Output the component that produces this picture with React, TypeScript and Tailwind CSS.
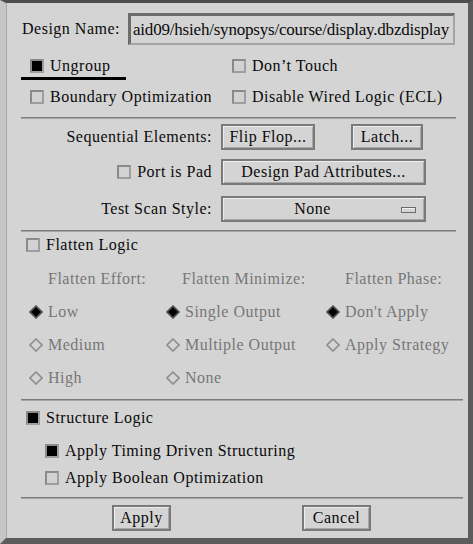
import React from "react";

function Check({ on }: { on?: boolean }) {
  return (
    <span
      className={`inline-block h-[14px] w-[14px] shrink-0 border-2 border-t-[#8a8a8a] border-l-[#8a8a8a] border-b-[#9e9e9e] border-r-[#9e9e9e] ${
        on ? "bg-black" : "bg-[#d2d2d2]"
      }`}
    />
  );
}

function Diamond({ on }: { on?: boolean }) {
  return (
    <svg width="14" height="14" viewBox="0 0 14 14" className="shrink-0">
      <polygon
        points="7,1 13,7 7,13 1,7"
        fill={on ? "#000" : "none"}
        stroke={on ? "#555" : "#8e8e8e"}
        strokeWidth="1.6"
      />
    </svg>
  );
}

function Btn({ children, className = "" }: { children: React.ReactNode; className?: string }) {
  return (
    <div
      className={`flex h-[26px] items-center justify-center border-2 border-[#7a7a7a] shadow-[inset_1px_1px_0_#eeeeee,inset_-1px_-1px_0_#a8a8a8] ${className}`}
    >
      {children}
    </div>
  );
}

function Sep({ wide }: { wide?: boolean }) {
  return (
    <div
      className={`ml-[14px] h-[2px] border-t border-t-[#7c7c7c] border-b border-b-[#a6a6a6] ${
        wide ? "w-[442px]" : "w-[435px]"
      }`}
    />
  );
}

function Radio({ on, label }: { on?: boolean; label: string }) {
  return (
    <div className="flex items-center gap-[5px]">
      <Diamond on={on} />
      <span className="text-[#777]">{label}</span>
    </div>
  );
}

export default function App() {
  return (
    <div className="h-[544px] w-[473px] border-t-[3px] border-t-[#4d4d4d] border-l-[6px] border-l-[#c6c6c6] border-r-[5px] border-r-[#5c5c5c] border-b-[6px] border-b-[#5c5c5c] bg-[#d4d4d4] font-['Liberation_Serif',serif] text-[16px] tracking-[0.5px] text-[#0a0a0a]">
      <div className="h-full border-l border-l-[#a8a8a8] pt-[10px]">
        {/* Design name */}
        <div className="flex h-[32px] items-center">
          <span className="ml-[15px] w-[106px]">Design Name:</span>
          <div className="flex h-[32px] w-[327px] items-center border-t-[3px] border-l-[3px] border-t-[#6c6c6c] border-l-[#6c6c6c] border-b-2 border-r-2 border-b-[#a4a4a4] border-r-[#a4a4a4] pl-[2px] text-[17px] tracking-[-0.2px]">
            aid09/hsieh/synopsys/course/display.dbzdisplay
          </div>
        </div>

        {/* Options */}
        <div className="mt-[10px] flex h-[25px]">
          <div className="ml-[14px] flex w-[105px] items-center gap-[6px] border-b-[3px] border-b-black pl-[9px]">
            <Check on />
            <span>Ungroup</span>
          </div>
          <div className="ml-[106px] flex items-center gap-[6px] pb-[3px]">
            <Check />
            <span>Don&rsquo;t Touch</span>
          </div>
        </div>
        <div className="mt-[5px] flex h-[24px] items-center">
          <div className="ml-[23px] flex w-[202px] items-center gap-[6px]">
            <Check />
            <span>Boundary Optimization</span>
          </div>
          <div className="flex items-center gap-[6px]">
            <Check />
            <span>Disable Wired Logic (ECL)</span>
          </div>
        </div>

        <div className="mt-[8px]">
          <Sep />
        </div>

        {/* Sequential / pad / scan */}
        <div className="mt-[5px] flex h-[26px] items-center">
          <span className="w-[207px] pr-[2px] text-right">Sequential Elements:</span>
          <Btn className="ml-[7px] w-[94px]">Flip Flop...</Btn>
          <Btn className="ml-[36px] w-[72px]">Latch...</Btn>
        </div>
        <div className="mt-[9px] flex h-[26px] items-center">
          <div className="flex w-[207px] items-center justify-end gap-[6px] pr-[2px]">
            <Check />
            <span>Port is Pad</span>
          </div>
          <Btn className="ml-[7px] w-[205px]">Design Pad Attributes...</Btn>
        </div>
        <div className="mt-[11px] flex h-[26px] items-center">
          <span className="w-[207px] pr-[2px] text-right">Test Scan Style:</span>
          <Btn className="relative ml-[7px] w-[205px]">
            <span className="-ml-[22px]">None</span>
            <span className="absolute right-[8px] top-[9px] h-[6px] w-[15px] border border-[#6a6a6a] shadow-[inset_1px_1px_0_#f0f0f0]" />
          </Btn>
        </div>

        <div className="mt-[8px]">
          <Sep />
        </div>

        {/* Flatten */}
        <div className="mt-[3px] flex h-[20px] items-center gap-[6px] pl-[19px]">
          <Check />
          <span>Flatten Logic</span>
        </div>
        <div className="mt-[12px] grid h-[20px] grid-cols-[134px_163px_1fr] items-center pl-[41px] text-[#777]">
          <span>Flatten Effort:</span>
          <span>Flatten Minimize:</span>
          <span>Flatten Phase:</span>
        </div>
        <div className="mt-[13px] grid h-[20px] grid-cols-[137px_160px_1fr] items-center pl-[22px]">
          <Radio on label="Low" />
          <Radio on label="Single Output" />
          <Radio on label="Don't Apply" />
        </div>
        <div className="mt-[13px] grid h-[20px] grid-cols-[137px_160px_1fr] items-center pl-[22px]">
          <Radio label="Medium" />
          <Radio label="Multiple Output" />
          <Radio label="Apply Strategy" />
        </div>
        <div className="mt-[13px] grid h-[20px] grid-cols-[137px_160px_1fr] items-center pl-[22px]">
          <Radio label="High" />
          <Radio label="None" />
        </div>

        <div className="mt-[13px]">
          <Sep wide />
        </div>

        {/* Structure */}
        <div className="mt-[7px] flex h-[20px] items-center gap-[6px] pl-[19px]">
          <Check on />
          <span>Structure Logic</span>
        </div>
        <div className="mt-[13px] flex h-[20px] items-center gap-[6px] pl-[38px]">
          <Check on />
          <span>Apply Timing Driven Structuring</span>
        </div>
        <div className="mt-[7px] flex h-[20px] items-center gap-[6px] pl-[38px]">
          <Check />
          <span>Apply Boolean Optimization</span>
        </div>

        <div className="mt-[9px]">
          <Sep wide />
        </div>

        {/* Actions */}
        <div className="mt-[6px] flex h-[26px]">
          <Btn className="ml-[105px] w-[59px]">Apply</Btn>
          <Btn className="ml-[131px] w-[69px]">Cancel</Btn>
        </div>
      </div>
    </div>
  );
}
